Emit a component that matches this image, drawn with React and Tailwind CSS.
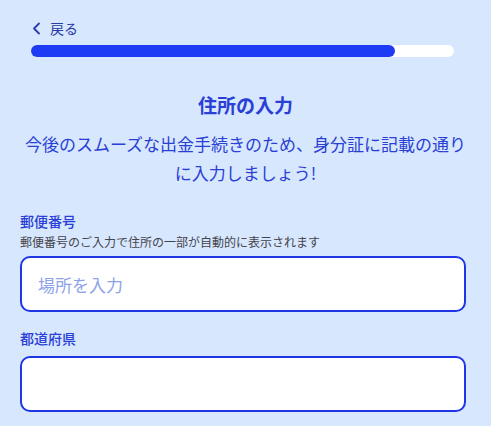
import { useState } from 'react';

export default function App() {
  const [zip, setZip] = useState('');
  const [pref, setPref] = useState('');

  return (
    <div className="min-h-screen bg-[#d7e7fd] font-['Noto_Sans_CJK_JP','Noto_Sans',sans-serif]">
      {/* Header */}
      <div className="pt-[19px] pl-[31px]">
        <button className="flex items-center gap-[8px] text-[14px] leading-[18px] text-[#2a3aa6]">
          <svg width="11" height="13" viewBox="0 0 11 13" fill="none" stroke="currentColor" strokeWidth="1.8" strokeLinecap="round" strokeLinejoin="round">
            <path d="M8 1.5 L3 6.5 L8 11.5" />
          </svg>
          <span>戻る</span>
        </button>
        <div className="mt-[8px] h-[12px] w-[423px] rounded-full bg-white">
          <div className="h-full w-[86%] rounded-full bg-[#1d3af5]" />
        </div>
      </div>

      <div className="px-5">
        <h1 className="mt-[36px] text-center text-[19px] font-bold leading-[24px] text-[#2a3fd6]">住所の入力</h1>
        <p className="mt-[12px] text-center text-[17px] leading-[29px] text-[#2a3fd6]">
          今後のスムーズな出金手続きのため、身分証に記載の通りに入力しましょう!
        </p>

        {/* 郵便番号 */}
        <label className="mt-[25px] block text-[14px] font-medium leading-[18px] text-[#2a3fd6]">郵便番号</label>
        <p className="mt-[3px] text-[12px] leading-[17px] text-[#44444c]">郵便番号のご入力で住所の一部が自動的に表示されます</p>
        <input
          value={zip}
          onChange={(e) => setZip(e.target.value)}
          placeholder="場所を入力"
          className="mt-[6px] block h-[56px] w-[446px] rounded-[10px] border-2 border-[#1f35e6] bg-white px-[16px] text-[17px] text-[#1f2a6e] outline-none placeholder:text-[#8ea2ea]"
        />

        {/* 都道府県 */}
        <label className="mt-[17px] block text-[14px] font-medium leading-[18px] text-[#2a3fd6]">都道府県</label>
        <input
          value={pref}
          onChange={(e) => setPref(e.target.value)}
          className="mt-[9px] block h-[56px] w-[446px] rounded-[10px] border-2 border-[#1f35e6] bg-white px-[16px] text-[17px] text-[#1f2a6e] outline-none"
        />
      </div>
    </div>
  );
}
